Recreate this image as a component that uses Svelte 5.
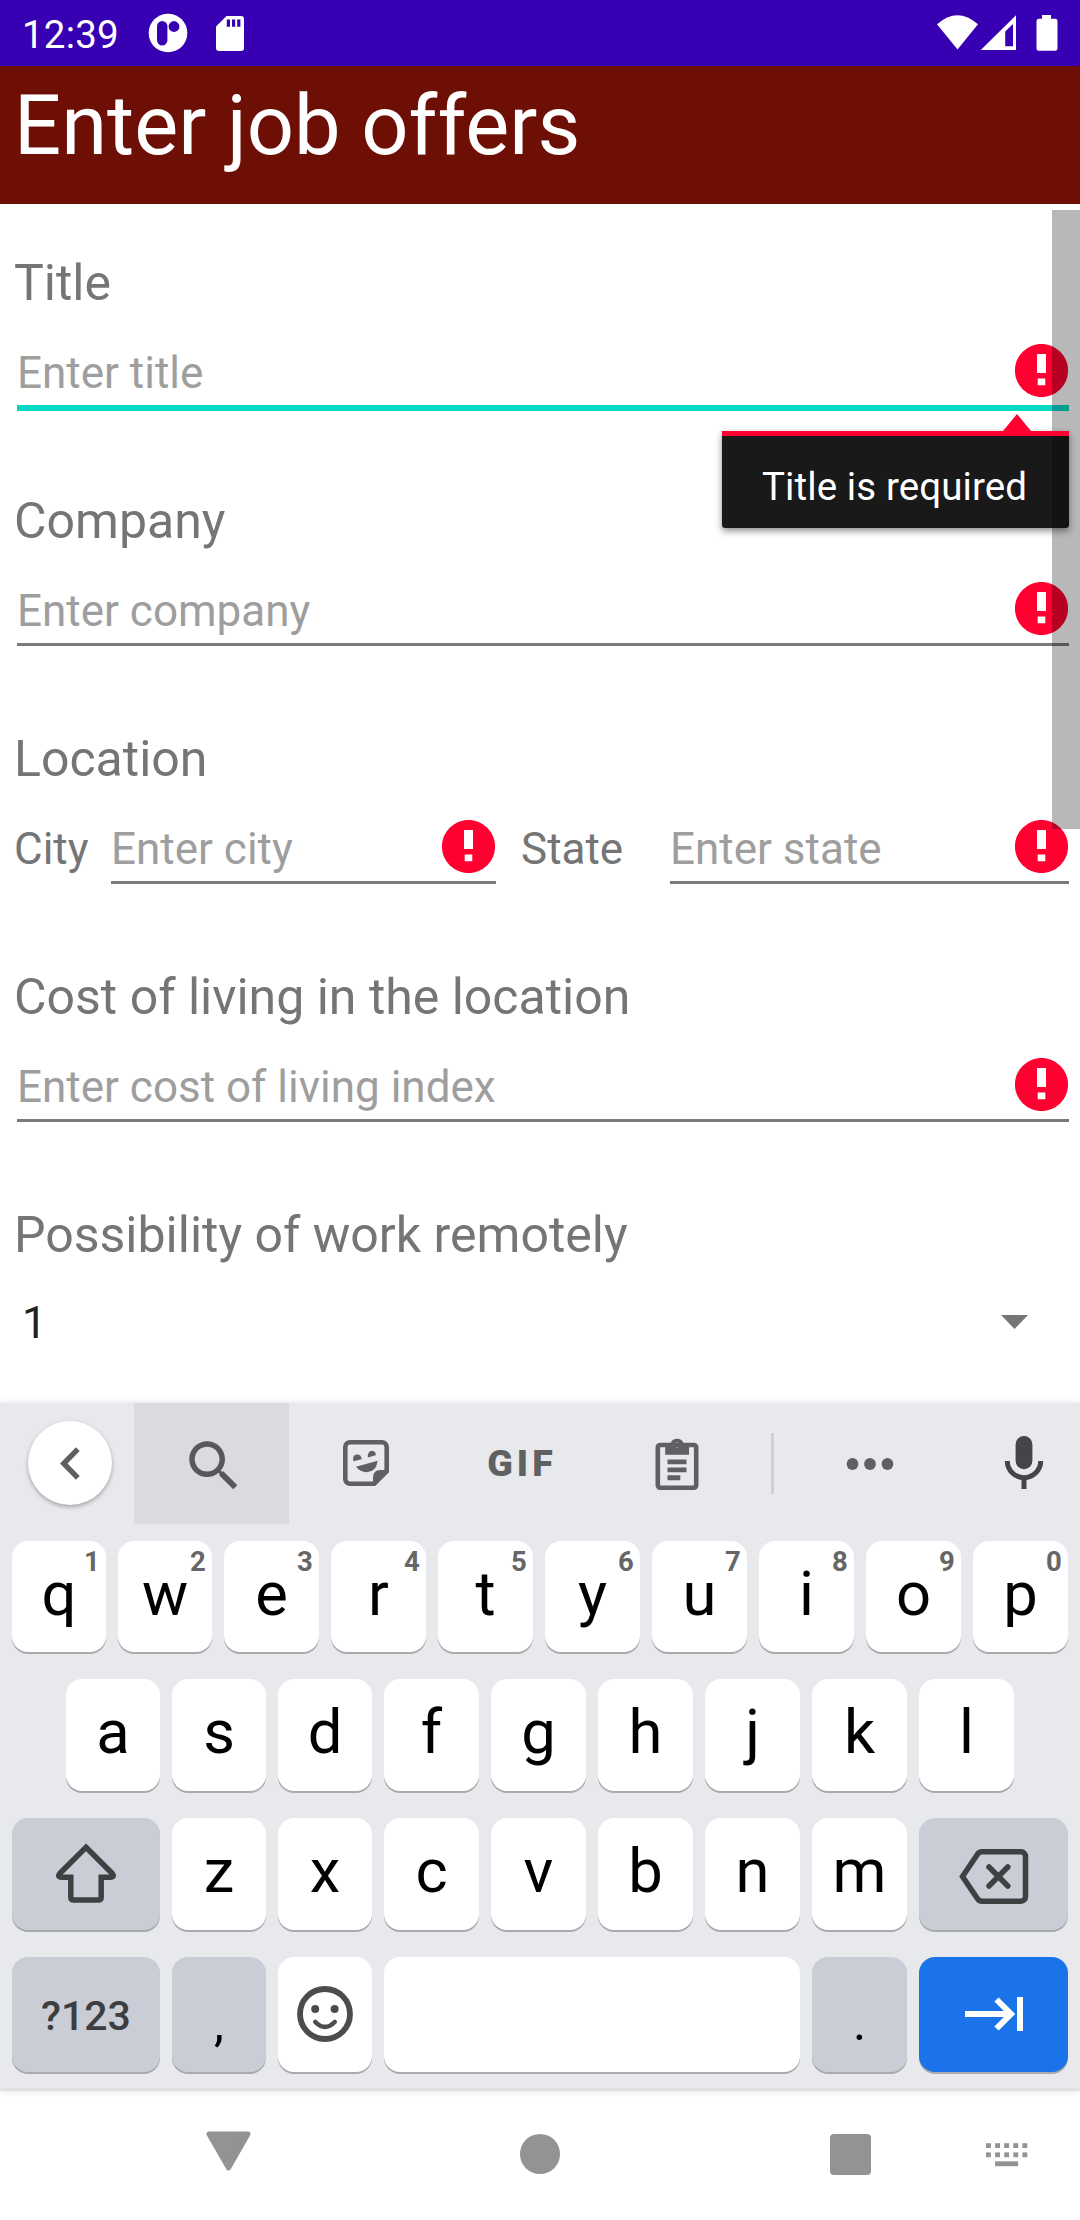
<script>
  const numberRow = [...'qwertyuiop'].map((letter, i) => ({ letter, digit: (i + 1) % 10 }));
  const homeRow = [...'asdfghjkl'];
  const lowerRow = [...'zxcvbnm'];
  const dotColumns = [0, 9.1, 18.2, 27.3, 36.4];
</script>

{#snippet alert()}
  <svg class="alert" viewBox="0 0 53 53" width="53" height="53">
    <circle cx="26.5" cy="26.5" r="26.6" fill="#ff0030" />
    <path d="M22 10h9v19h-9zM22.7 34.6h7.6v6.6h-7.6z" fill="#fff" />
  </svg>
{/snippet}

<div class="screen">
  <header class="status">
    <span class="clock">12:39</span>
    <svg class="app-badge" viewBox="0 0 40 40" width="40" height="40">
      <circle cx="20" cy="20" r="19.3" fill="#fff" />
      <rect x="9" y="8" width="10.4" height="24.5" rx="5.2" fill="#3700b3" />
      <circle cx="26" cy="13.5" r="5.4" fill="#3700b3" />
    </svg>
    <svg class="sd" viewBox="0 0 28 35" width="28" height="35">
      <path d="M10.5 0H25a3 3 0 0 1 3 3v29a3 3 0 0 1-3 3H3a3 3 0 0 1-3-3V10.5z" fill="#fff" />
      <path d="M10.8 3.5h3.2v7.2h-3.2zM16 3.5h3.2v7.2H16zM21.2 3.5h3.2v7.2h-3.2z" fill="#3700b3" />
    </svg>
    <svg class="signals" viewBox="0 0 121 36" width="121" height="36">
      <path d="M0 9.2Q20.5 -8.8 41 9.2L20.5 34.5z" fill="#fff" />
      <path d="M79 0.3V35H43.8zM76 9L68.2 16.4V31.2H76z" fill="#fff" fill-rule="evenodd" />
      <path d="M105 0h9v3.8h4a2.5 2.5 0 0 1 2.5 2.5v27a2.5 2.5 0 0 1-2.5 2.5h-16a2.5 2.5 0 0 1-2.5-2.5v-27a2.5 2.5 0 0 1 2.5-2.5h3z" fill="#fff" />
    </svg>
  </header>

  <div class="titlebar"><h1>Enter job offers</h1></div>

  <main class="form">
    <section>
      <label for="title">Title</label>
      <div class="field focused">
        <input id="title" placeholder="Enter title" />
        {@render alert()}
      </div>
    </section>
    <section>
      <label for="company">Company</label>
      <div class="field"><input id="company" placeholder="Enter company" />{@render alert()}</div>
    </section>
    <section>
      <div class="heading">Location</div>
      <div class="pair">
        <label class="inline city" for="city">City</label>
        <div class="field city-field"><input id="city" placeholder="Enter city" />{@render alert()}</div>
        <label class="inline state" for="state">State</label>
        <div class="field state-field"><input id="state" placeholder="Enter state" />{@render alert()}</div>
      </div>
    </section>
    <section>
      <label for="cost">Cost of living in the location</label>
      <div class="field"><input id="cost" placeholder="Enter cost of living index" />{@render alert()}</div>
    </section>
    <section>
      <div class="heading">Possibility of work remotely</div>
      <div class="spinner">
        <span>1</span>
        <svg viewBox="0 0 27 14" width="27" height="14"><path d="M0 0h27L13.5 14z" fill="#757575" /></svg>
      </div>
    </section>
    <div class="scrollbar"></div>
    <div class="tooltip">
      <svg viewBox="0 0 28 17" width="28" height="17"><path d="M0 17L14 0L28 17z" fill="#ff0030" /></svg>
      <p>Title is required</p>
    </div>
  </main>

  <div class="keyboard">
    <div class="tools">
      <button class="back" aria-label="Back">
        <svg viewBox="0 0 20 33" width="20" height="33"><path d="M17.8 2.2L3.7 16.5L17.8 30.8" fill="none" stroke="#5f6062" stroke-width="5.4" /></svg>
      </button>
      <button class="tool search" aria-label="Search">
        <svg viewBox="0 0 24 24" width="66" height="66"><path d="M15.5 14h-.79l-.28-.27C15.41 12.59 16 11.11 16 9.5 16 5.91 13.09 3 9.5 3S3 5.91 3 9.5 5.91 16 9.5 16c1.61 0 3.09-.59 4.23-1.57l.27.28v.79l5 4.99L20.49 19l-4.99-5zm-6 0C7.01 14 5 11.99 5 9.5S7.01 5 9.5 5 14 7.01 14 9.5 11.99 14 9.5 14z" fill="#57585b" /></svg>
      </button>
      <button class="tool" aria-label="Stickers">
        <svg class="raised" viewBox="0 0 46 46" width="46" height="46" fill="#5f6062">
          <path d="M7 2.3h32a4.7 4.7 0 0 1 4.7 4.7v24.2L31.2 43.7H7A4.7 4.7 0 0 1 2.3 39V7A4.7 4.7 0 0 1 7 2.3z" fill="none" stroke="#5f6062" stroke-width="4.6" />
          <path d="M30 45v-7.5Q30 30 37.5 30H45L31 45z" />
          <path d="M10.3 21.3Q9 15 14 14.6Q18.5 14.8 18.6 19.2zM24.8 17.4Q24.5 11 29.2 10.7Q33 11.2 32.8 15.3zM13 26.8L34.6 20.8Q33.5 32 23.5 32.2Q17 32 13 26.8z" />
        </svg>
      </button>
      <button class="tool gif">GIF</button>
      <button class="tool clip" aria-label="Clipboard">
        <svg viewBox="0 0 44 52" width="44" height="52" fill="#5f6062">
          <rect x="2.8" y="7" width="38.4" height="42.8" rx="2.5" fill="none" stroke="#5f6062" stroke-width="4.6" />
          <path fill-rule="evenodd" d="M10.2 5h5.5a7 7 0 0 1 12.8 0h5.5v11.8h-23.8zM22 4.6a2.5 2.5 0 1 0 .01 0z" />
          <path d="M12.5 21.4h19v4.9h-19zM12.5 29.4h19v4.9h-19zM12.5 37.3h12.8v4.9H12.5z" />
        </svg>
      </button>
      <i class="divider"></i>
      <button class="tool more" aria-label="More">
        <svg viewBox="0 0 48 12" width="48" height="12" fill="#5f6062"><circle cx="6.5" cy="6" r="5.9" /><circle cx="24" cy="6" r="5.9" /><circle cx="41.5" cy="6" r="5.9" /></svg>
      </button>
      <button class="tool mic" aria-label="Voice input">
        <svg viewBox="0 0 40 53" width="40" height="53">
          <rect x="11.6" y="0" width="16.8" height="33.2" rx="8.4" fill="#444547" />
          <path d="M3.3 25a16.7 16.7 0 0 0 33.4 0M20 41v12" fill="none" stroke="#444547" stroke-width="5" />
        </svg>
      </button>
    </div>

    <div class="row first">
      {#each numberRow as key}
        <button class="key">{key.letter}<small>{key.digit}</small></button>
      {/each}
    </div>
    <div class="row home">
      {#each homeRow as letter}<button class="key">{letter}</button>{/each}
    </div>
    <div class="row lower">
      <button class="key gray" aria-label="Shift">
        <svg class="shift" viewBox="0 0 62 60" width="62" height="60"><path d="M31 4.3L57 30.2Q60.2 34 55.5 34.2H46.2V54Q46.2 57 43.5 57H18.5Q15.8 57 15.8 54V34.2H6.5Q1.8 34 5 30.2z" fill="none" stroke="#3f4042" stroke-width="5.5" /></svg>
      </button>
      {#each lowerRow as letter}<button class="key">{letter}</button>{/each}
      <button class="key gray" aria-label="Delete">
        <svg class="delete" viewBox="0 0 70 55" width="70" height="55" fill="none" stroke="#3f4042" stroke-width="5.5"><path d="M23 2.8H62A4.5 4.5 0 0 1 66.5 7.3V47.7A4.5 4.5 0 0 1 62 52.2H23Q20 52.2 18.5 49.8L3.5 27.5L18.5 5.2Q20 2.8 23 2.8z" /><path d="M30 18L48.8 37M48.8 18L30 37" stroke-linecap="round" /></svg>
      </button>
    </div>
    <div class="row bottom">
      <button class="key gray symbols">?123</button>
      <button class="key gray punct">,</button>
      <button class="key" aria-label="Emoji">
        <svg class="raised" viewBox="0 0 56 56" width="56" height="56"><circle cx="28" cy="28" r="25" fill="none" stroke="#4b4c4e" stroke-width="5.8" /><circle cx="18.2" cy="23" r="4" fill="#4b4c4e" /><circle cx="37.6" cy="23" r="4" fill="#4b4c4e" /><path d="M18.3 36Q28 45.8 37.7 36" fill="none" stroke="#4b4c4e" stroke-width="4.6" stroke-linecap="round" /></svg>
      </button>
      <button class="key" aria-label="Space"></button>
      <button class="key gray punct">.</button>
      <button class="key next" aria-label="Next">
        <svg class="raised" viewBox="0 0 58 34" width="58" height="34" fill="none" stroke="#fff" stroke-width="6"><path d="M0 17H46M31.5 2.5L46 17L31.5 31.5M55 0V34" /></svg>
      </button>
    </div>
  </div>

  <nav>
    <svg class="nav-back" viewBox="0 0 45 40" width="45" height="40"><path d="M3 3H42L22.5 37z" fill="#939393" stroke="#939393" stroke-width="5" stroke-linejoin="round" /></svg>
    <i class="nav-home"></i>
    <i class="nav-recent"></i>
    <svg class="nav-keys" viewBox="0 0 42 24" width="42" height="24" fill="#939393">
      {#each dotColumns as x}
        <rect {x} y="0.2" width="4.9" height="4.8" />
        <rect {x} y="9.4" width="4.9" height="4.8" />
      {/each}
      <rect x="9.1" y="18.3" width="23" height="4.9" />
    </svg>
  </nav>
</div>

<style>
  :global(body) { margin: 0; background: #fff; }
  * { box-sizing: border-box; }
  .screen { width: 1080px; height: 2220px; display: flex; flex-direction: column; overflow: hidden; background: #fff; font-family: Roboto, "Liberation Sans", sans-serif; }
  svg { display: block; flex: none; }
  button { border: 0; padding: 0; background: none; font-family: inherit; }

  .status { height: 66px; flex: none; display: flex; align-items: flex-start; padding: 0 22px; background: #3700b3; color: #fff; }
  .clock { width: 126px; font-size: 38.5px; line-height: 70px; letter-spacing: 0.2px; }
  .app-badge { margin-top: 13px; }
  .sd { margin: 16px 0 0 27.5px; }
  .signals { margin: 15px 0 0 auto; }

  .titlebar { height: 138px; flex: none; padding-left: 14px; background: #6d0f05; color: #fff; }
  h1 { margin: 0; font-size: 83px; font-weight: 400; line-height: 120px; }

  .form { position: relative; height: 1199px; flex: none; padding: 50px 11px 0 14px; color: #757575; }
  section { height: 238px; }
  label, .heading { display: block; font-size: 50px; line-height: 58px; }
  .field { display: flex; align-items: flex-start; height: 64px; margin: 32px 0 0 3px; padding-right: 1px; border-bottom: 3px solid #7a7a7a; }
  .field.focused { height: 67px; border-bottom: 6px solid #03dac5; }
  input { flex: 1; min-width: 0; height: 58px; padding: 0; border: 0; outline: 0; background: none; font: 44px/58px Roboto, "Liberation Sans", sans-serif; }
  input::placeholder { color: #9e9e9e; opacity: 1; }
  .pair { display: flex; padding-top: 32px; }
  .pair .field { margin: 0; }
  .inline { font-size: 44px; }
  .city { width: 97px; }
  .city-field { width: 385px; }
  .state { width: 174px; padding-left: 25px; }
  .state-field { width: 399px; }
  .spinner { display: flex; justify-content: space-between; align-items: center; height: 58px; margin: 29px 41px 0 8px; font-size: 44px; color: #212121; }
  .spinner span { line-height: 56px; padding-top: 2px; }
  .scrollbar { position: absolute; top: 6px; right: 0; width: 28px; height: 619px; background: rgba(0, 0, 0, 0.28); }
  .tooltip { position: absolute; top: 227px; right: 11px; width: 347px; height: 97px; border-top: 5px solid #ff0030; border-radius: 0 0 3px 3px; background: rgba(0, 0, 0, 0.9) padding-box; box-shadow: 0 3px 7px rgba(0, 0, 0, 0.45); color: #fff; }
  .tooltip svg { position: absolute; top: -22px; right: 38px; }
  .tooltip p { margin: 27px 0 0 40px; font-size: 38.5px; line-height: 48px; letter-spacing: 0.1px; white-space: nowrap; }

  .keyboard { position: relative; height: 688px; flex: none; border-bottom: 3px solid #dfe0e0; background: #e8e9ed; box-shadow: 0 0 8px rgba(0, 0, 0, 0.12); }
  .tools { display: flex; height: 121px; }
  .back { display: flex; flex: none; align-items: center; justify-content: center; width: 84px; height: 84px; margin: 18px 22px 0 28px; border-radius: 50%; background: #fff; box-shadow: 0 2px 4px rgba(0, 0, 0, 0.3); }
  .tool { display: flex; flex: none; align-items: center; justify-content: center; width: 154px; height: 121px; }
  .search { width: 155px; padding: 4px 0 0 4px; background: #dadbdf; }
  .gif { padding: 0 0 2px 4px; font-size: 37.5px; font-weight: 900; letter-spacing: 4px; color: #5f6062; }
  .clip { width: 159px; }
  .divider { flex: none; width: 3px; height: 61px; margin: 30px 0 0 15px; background: #d0d1d5; }
  .more { width: 191px; }
  .mic { width: 115px; padding: 0 0 2px 3px; }

  .row { display: grid; grid-template-rows: 100%; gap: 12px; padding: 0 12px; height: 112px; }
  .first { grid-template-columns: repeat(2, 94px) repeat(8, 95px); height: 111px; margin-top: 17px; }
  .home { grid-template-columns: repeat(3, 94px) repeat(6, 95px); margin-top: 27px; padding: 0 66px; }
  .lower { grid-template-columns: 148px repeat(2, 94px) repeat(5, 95px) 149px; margin-top: 27px; }
  .bottom { grid-template-columns: 148px repeat(2, 94px) 416px 95px 149px; height: 115px; margin-top: 27px; }
  .key { position: relative; display: flex; justify-content: center; min-width: 0; border-radius: 16px; background: #fff; box-shadow: 0 2px 0 #a9aaac; color: #000; font-size: 61.5px; line-height: 106px; }
  .key small { position: absolute; top: 4px; right: 4px; width: 20px; text-align: center; font-size: 27.5px; line-height: 33px; font-weight: 700; color: #666; }
  .key svg { align-self: center; }
  .gray { background: #cbcdd6; }
  .key .shift { margin-top: -2px; }
  .key .delete { margin-top: 5px; }
  .raised { margin-bottom: 2px; }
  .symbols { font-size: 41px; font-weight: 500; line-height: 118px; color: #3d3e40; }
  .punct { font-size: 50px; line-height: 132px; }
  .next { background: #1a73e8; }

  nav { display: flex; flex: 1; align-items: flex-start; background: #fff; }
  .nav-back { margin: 40px 0 0 206px; }
  .nav-home { width: 40px; height: 40px; margin: 43px 0 0 269px; border-radius: 50%; background: #939393; }
  .nav-recent { width: 41px; height: 41px; margin: 43px 0 0 270px; border-radius: 4px; background: #939393; }
  .nav-keys { margin: 52px 0 0 115px; }
</style>
